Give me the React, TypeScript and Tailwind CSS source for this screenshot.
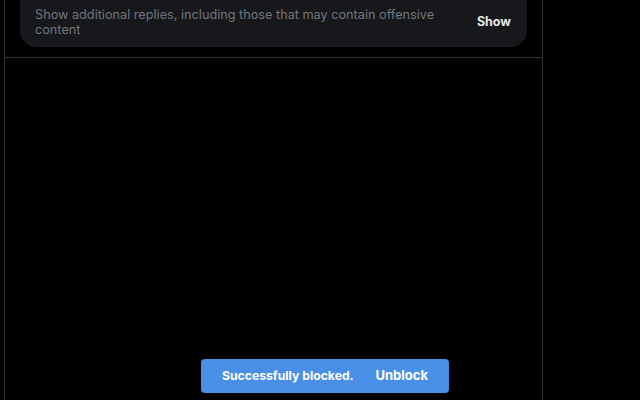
import React from 'react';

const App: React.FC = () => {
  return (
    <div className="relative h-[400px] w-[640px] overflow-hidden bg-black font-['Inter','Noto_Sans',sans-serif]">
      {/* Main timeline column */}
      <div className="ml-[4px] flex h-full w-[539px] flex-col border-x border-[#2f3336]">
        <div className="px-[15px] pb-[10px]">
          <div className="-mt-[20px] flex items-center justify-between rounded-[16px] bg-[#16181c] pb-[10px] pl-[15px] pr-[16px] pt-[27px]">
            <p className="w-[420px] text-[12.7px] leading-[15px] text-[#71767b]">
              Show additional replies, including those that may contain offensive content
            </p>
            <button className="text-[12.5px] font-bold text-[#e7e9ea]">Show</button>
          </div>
        </div>
        <div className="border-t border-[#2f3336]" />
      </div>

      {/* Toast */}
      <div className="absolute bottom-[7px] left-[201px] flex h-[34px] w-[248px] items-center justify-between rounded-[4px] bg-[#4a8fe6] px-[21px] text-[12.2px] font-bold text-white">
        <span>Successfully blocked.</span>
        <button className="text-[13px] font-bold">Unblock</button>
      </div>
    </div>
  );
};

export default App;
